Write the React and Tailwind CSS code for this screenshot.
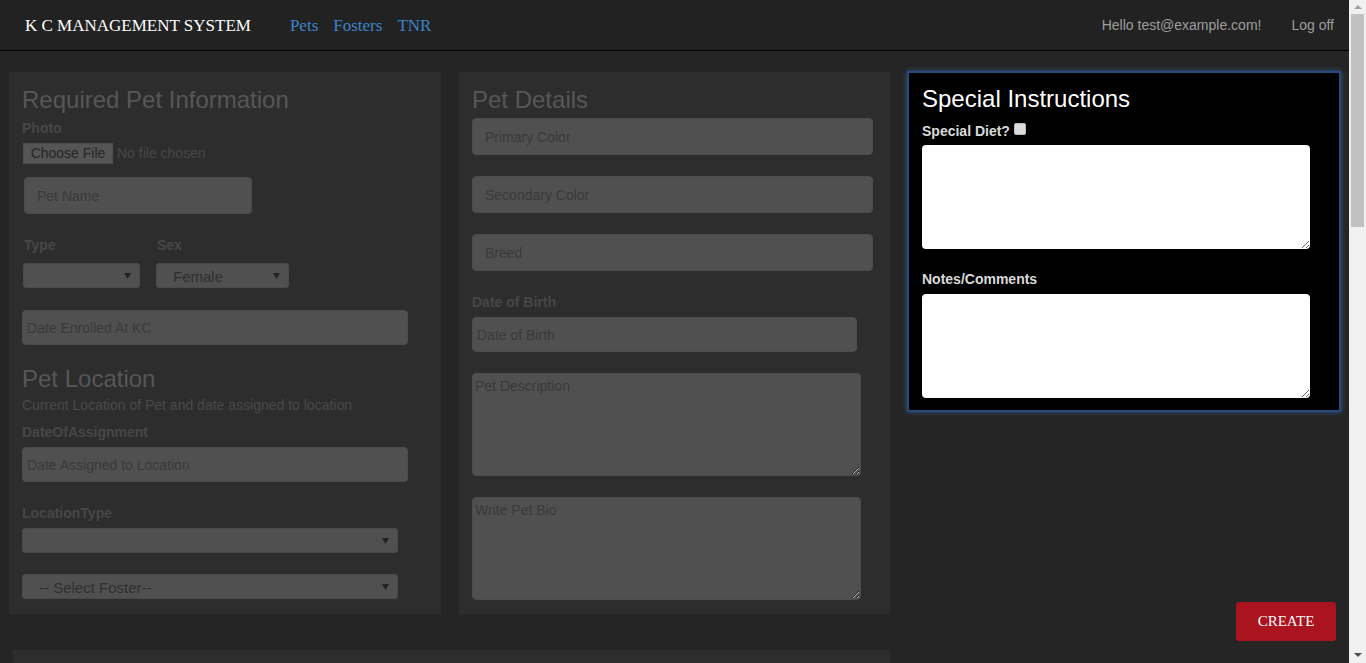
import React from 'react';

const Caret = () => (
    <svg width="7" height="6" viewBox="0 0 7 6" className="shrink-0">
        <path d="M0 0 L7 0 L3.5 6 Z" fill="#222" />
    </svg>
);

const FakeSelect = ({ className, text }) => (
    <div className={`flex items-center justify-between h-[25px] bg-[#505050] border border-[#4a4a4a] rounded-[3px] pl-[16px] pr-[8px] ${className}`}>
        <span className="text-[15px] text-[#2f2f2f] pt-[3px]">{text}</span>
        <Caret />
    </div>
);

const darkInput =
    'block bg-[#505050] border border-[#4c4c4c] rounded-[4px] text-[14px] text-[#ccc] placeholder:text-[#3a3a3a] outline-none';

const Label = ({ children, className = '' }) => (
    <div className={`text-[14px] font-bold leading-[20px] text-[#474747] ${className}`}>{children}</div>
);

const Heading = ({ children, className = '' }) => (
    <h2 className={`text-[24px] leading-[26px] text-[#575757] ${className}`}>{children}</h2>
);

// window scrollbar, page is scrolled to the top
const ScrollBar = () => (
    <div className="w-[17px] h-screen shrink-0 bg-[#f1f1f1] flex flex-col items-center">
        <div className="h-[14px] flex items-center justify-center">
            <svg width="8" height="4" viewBox="0 0 8 4"><path d="M0 4 L8 4 L4 0 Z" fill="#a3a3a3" /></svg>
        </div>
        <div className="w-[13px] h-[213px] bg-[#c1c1c1]" />
        <div className="mt-auto h-[17px] flex items-center justify-center">
            <svg width="8" height="4" viewBox="0 0 8 4"><path d="M0 0 L8 0 L4 4 Z" fill="#505050" /></svg>
        </div>
    </div>
);

const App = () => {
    return (
        <div className="flex h-screen overflow-hidden bg-[#252525] font-['Liberation_Sans',Arial,sans-serif]">
            <div className="flex-1 min-w-0">
                <nav className="h-[51px] bg-[#222] border-b border-black flex items-center pl-[25px] pr-[15px]">
                    <span className="font-['Liberation_Serif','Times_New_Roman',serif] text-[17px] leading-[20px] text-white pt-[2px]">
                        K C MANAGEMENT SYSTEM
                    </span>
                    <div className="flex gap-[15px] ml-[39px] font-['Liberation_Serif','Times_New_Roman',serif] text-[17px] leading-[20px] text-[#3c84cc] pt-[2px]">
                        <a href="#">Pets</a>
                        <a href="#">Fosters</a>
                        <a href="#">TNR</a>
                    </div>
                    <div className="ml-auto flex gap-[30px] text-[14px] leading-[20px] text-[#9d9d9d]">
                        <span>Hello test@example.com!</span>
                        <a href="#">Log off</a>
                    </div>
                </nav>

                <div className="flex items-start gap-[18px] pt-[21px] pl-[9px]">
                    {/* Required info */}
                    <section className="w-[432px] h-[542px] bg-[#2d2d2d] pt-[15px] px-[13px]">
                        <Heading>Required Pet Information</Heading>
                        <Label className="mt-[5px]">Photo</Label>
                        <div className="mt-[5px] flex items-center text-[14px]">
                            <div className="w-[90px] h-[21px] bg-[#555] border border-[#4e4e4e] flex items-center justify-center text-[#262626] ml-[1px]">
                                Choose File
                            </div>
                            <span className="ml-[4px] text-[#474747]">No file chosen</span>
                        </div>
                        <input className={`${darkInput} mt-[13px] ml-[2px] w-[228px] h-[37px] pl-[12px]`} placeholder="Pet Name" />
                        <div className="mt-[21px] flex">
                            <div className="ml-[1px] w-[117px]">
                                <Label className="pl-[1px]">Type</Label>
                                <FakeSelect className="mt-[8px]" text="" />
                            </div>
                            <div className="ml-[16px] w-[133px]">
                                <Label className="pl-[1px]">Sex</Label>
                                <FakeSelect className="mt-[8px]" text="Female" />
                            </div>
                        </div>
                        <input className={`${darkInput} mt-[22px] w-[386px] h-[35px] pl-[4px]`} placeholder="Date Enrolled At KC" />

                        <Heading className="mt-[21px]">Pet Location</Heading>
                        <p className="mt-[3px] text-[14px] leading-[20px] text-[#4a4a4a]">
                            Current Location of Pet and date assigned to location
                        </p>
                        <Label className="mt-[7px]">DateOfAssignment</Label>
                        <input className={`${darkInput} mt-[5px] w-[386px] h-[35px] pl-[4px]`} placeholder="Date Assigned to Location" />
                        <Label className="mt-[21px]">LocationType</Label>
                        <FakeSelect className="mt-[5px] w-[376px]" text="" />
                        <FakeSelect className="mt-[21px] w-[376px]" text="-- Select Foster--" />
                    </section>

                    {/* Pet details */}
                    <section className="w-[431px] h-[542px] bg-[#2d2d2d] pt-[15px] px-[13px]">
                        <Heading>Pet Details</Heading>
                        <input className={`${darkInput} mt-[5px] w-[401px] h-[37px] pl-[12px]`} placeholder="Primary Color" />
                        <input className={`${darkInput} mt-[21px] w-[401px] h-[37px] pl-[12px]`} placeholder="Secondary Color" />
                        <input className={`${darkInput} mt-[21px] w-[401px] h-[37px] pl-[12px]`} placeholder="Breed" />
                        <Label className="mt-[21px]">Date of Birth</Label>
                        <input className={`${darkInput} mt-[5px] w-[385px] h-[35px] pl-[4px]`} placeholder="Date of Birth" />
                        <textarea className={`${darkInput} mt-[21px] w-[389px] h-[103px] p-[2px]`} placeholder="Pet Description" />
                        <textarea className={`${darkInput} mt-[21px] w-[389px] h-[103px] p-[2px]`} placeholder="Write Pet Bio" />
                    </section>

                    {/* Special instructions + create */}
                    <div className="w-[434px] -mt-px -ml-px flex flex-col items-end">
                        <section className="w-full bg-black border-2 border-[#264a7e] shadow-[0_0_5px_rgba(70,130,210,0.55)] pt-[13px] pb-[12px] px-[13px]">
                            <h2 className="text-[24px] leading-[26px] text-white">Special Instructions</h2>
                            <div className="mt-[9px] flex items-start">
                                <span className="text-[14px] font-bold leading-[20px] text-[#dadada]">Special Diet?</span>
                                <span className="ml-[4px] mt-[2px] w-[12px] h-[12px] bg-[#dcdcdc] border border-[#bbb] rounded-[2px]" />
                            </div>
                            <textarea className="block mt-[4px] w-[388px] h-[104px] bg-white rounded-[4px] outline-none p-[2px]" />
                            <div className="mt-[20px] text-[14px] font-bold leading-[20px] text-[#dadada]">Notes/Comments</div>
                            <textarea className="block mt-[5px] w-[388px] h-[104px] bg-white rounded-[4px] outline-none p-[2px]" />
                        </section>
                        <button className="mt-[190px] mr-[5px] w-[100px] h-[39px] bg-[#a9141f] rounded-[3px] text-white font-['Liberation_Serif','Times_New_Roman',serif] text-[15px]">
                            CREATE
                        </button>
                    </div>
                </div>

                <section className="mt-[9px] ml-[13px] w-[877px] h-[600px] bg-[#2d2d2d]" />
            </div>
            <ScrollBar />
        </div>
    );
};

export default App;
